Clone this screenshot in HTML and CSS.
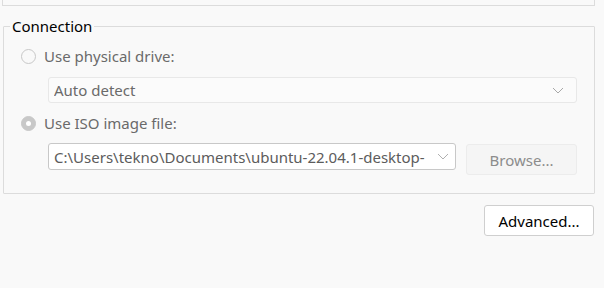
FILE: index.html
```html
<!DOCTYPE html>
<html lang="en">
<head>
  <meta charset="UTF-8" />
  <title>Connection</title>
  <link rel="stylesheet" href="styles.css">
</head>
<body>
  <div class="top-panel"></div>

  <fieldset class="group">
    <legend>Connection</legend>

    <div class="radio-row">
      <span class="radio"></span>
      <span class="label">Use physical drive:</span>
    </div>

    <div class="select flat">
      <span class="value">Auto detect</span>
      <svg class="chev" width="12" height="7" viewBox="0 0 12 7"><polyline points="1,1 6,6 11,1" fill="none" stroke="#a8a8a8" stroke-width="1"/></svg>
    </div>

    <div class="radio-row">
      <span class="radio checked"></span>
      <span class="label">Use ISO image file:</span>
    </div>

    <div class="iso-row">
      <div class="select combo">
        <span class="value path">C:\Users\tekno\Documents\ubuntu-22.04.1-desktop-</span>
        <svg class="chev" width="12" height="7" viewBox="0 0 12 7"><polyline points="1,1 6,6 11,1" fill="none" stroke="#b0b0b0" stroke-width="1"/></svg>
      </div>
      <button class="btn disabled">Browse...</button>
    </div>
  </fieldset>

  <div class="actions">
    <button class="btn">Advanced...</button>
  </div>
</body>
</html>
```

FILE: styles.css
```css
body {
  margin: 0;
  background-color: #f9f9f9;
  font-family: "Noto Sans", "Open Sans", sans-serif;
  font-size: 14px;
  color: #000;
}
.top-panel {
  height: 6px;
  margin: 0 9px 0 2px;
  border: 1px solid #dcdcdc;
  border-top: none;
  box-sizing: border-box;
}
.group {
  margin: 10px 9px 0 3px;
  padding: 0 17px 18px 17px;
  border: 1px solid #dcdcdc;
  border-radius: 1px;
}
.group legend {
  padding: 0 2px;
  margin-left: -11px;
  line-height: 20px;
  font-size: 15px;
}
.radio-row {
  display: flex;
  align-items: center;
  height: 20px;
  margin-top: 10px;
  color: #6a6a6a;
  font-size: 15px;
}
.radio {
  width: 15px;
  height: 15px;
  border: 1px solid #c8c8c8;
  border-radius: 50%;
  box-sizing: border-box;
  margin-right: 8px;
}
.radio.checked {
  background-color: #c8c8c8;
  position: relative;
}
.radio.checked::after {
  content: "";
  position: absolute;
  left: 4px;
  top: 4px;
  width: 5px;
  height: 5px;
  border-radius: 50%;
  background: #fff;
}
.select {
  display: flex;
  align-items: center;
  box-sizing: border-box;
  border-radius: 3px;
  padding: 0 12px 0 5px;
  overflow: hidden;
}
.select .value {
  flex: 1;
  white-space: nowrap;
  overflow: hidden;
  font-size: 15px;
}
.select.flat {
  margin: 11px 0 0 27px;
  height: 26px;
  border: 1px solid #e8e8e8;
  background-color: #fbfbfb;
  color: #6a6a6a;
}
.iso-row {
  display: flex;
  align-items: flex-start;
  margin: 10px 0 0 27px;
}
.select.combo {
  width: 408px;
  height: 27px;
  border: 1px solid #c8c8c8;
  background-color: #fff;
  color: #5c5c5c;
  padding-right: 6px;
}
.select.combo .value {
  margin-right: 8px;
}
.btn {
  font-family: "Noto Sans", "Open Sans", sans-serif;
  font-size: 15px;
  height: 31px;
  border: 1px solid #cfcfcf;
  border-radius: 3px;
  background-color: #fff;
  color: #000;
  padding: 0;
}
.btn.disabled {
  width: 111px;
  margin: 1px 0 0 10px;
  background-color: #f5f5f5;
  border-color: #ececec;
  color: #8c8c8c;
}
.actions {
  display: flex;
  justify-content: flex-end;
  margin: 11px 10px 0 0;
}
.actions .btn {
  width: 110px;
}
```
